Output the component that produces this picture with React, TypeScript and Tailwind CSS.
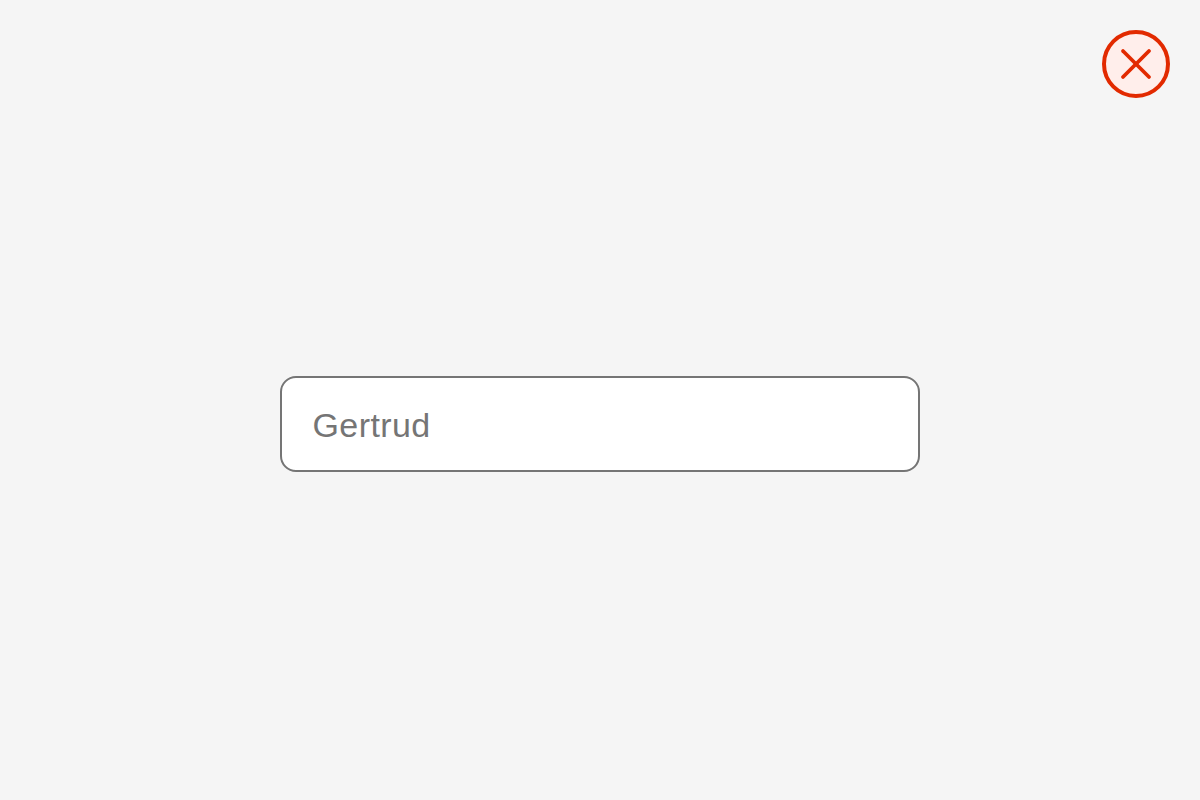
export default function App() {
  return (
    <div className="flex h-[800px] w-full flex-col overflow-hidden bg-[#f5f5f5] font-['Liberation_Sans',sans-serif]">
      <div className="flex justify-end pr-[30px] pt-[30px]">
        <button
          type="button"
          aria-label="Close"
          className="flex h-[68px] w-[68px] items-center justify-center rounded-full border-4 border-[#e22a00] bg-[#ffeeeb]"
        >
          <svg width="32" height="32" viewBox="0 0 32 32" fill="none" stroke="#e22a00" strokeWidth="3.8" strokeLinecap="round">
            <path d="M3 3 L29 29" />
            <path d="M29 3 L3 29" />
          </svg>
        </button>
      </div>
      <div className="mt-[278px] flex justify-center">
        <div className="flex h-[96px] w-[640px] items-center rounded-2xl border-2 border-[#757575] bg-white pl-[30.5px] pt-[2px] text-[34px] tracking-[0.4px] text-[#757575]">
          Gertrud
        </div>
      </div>
    </div>
  );
}
